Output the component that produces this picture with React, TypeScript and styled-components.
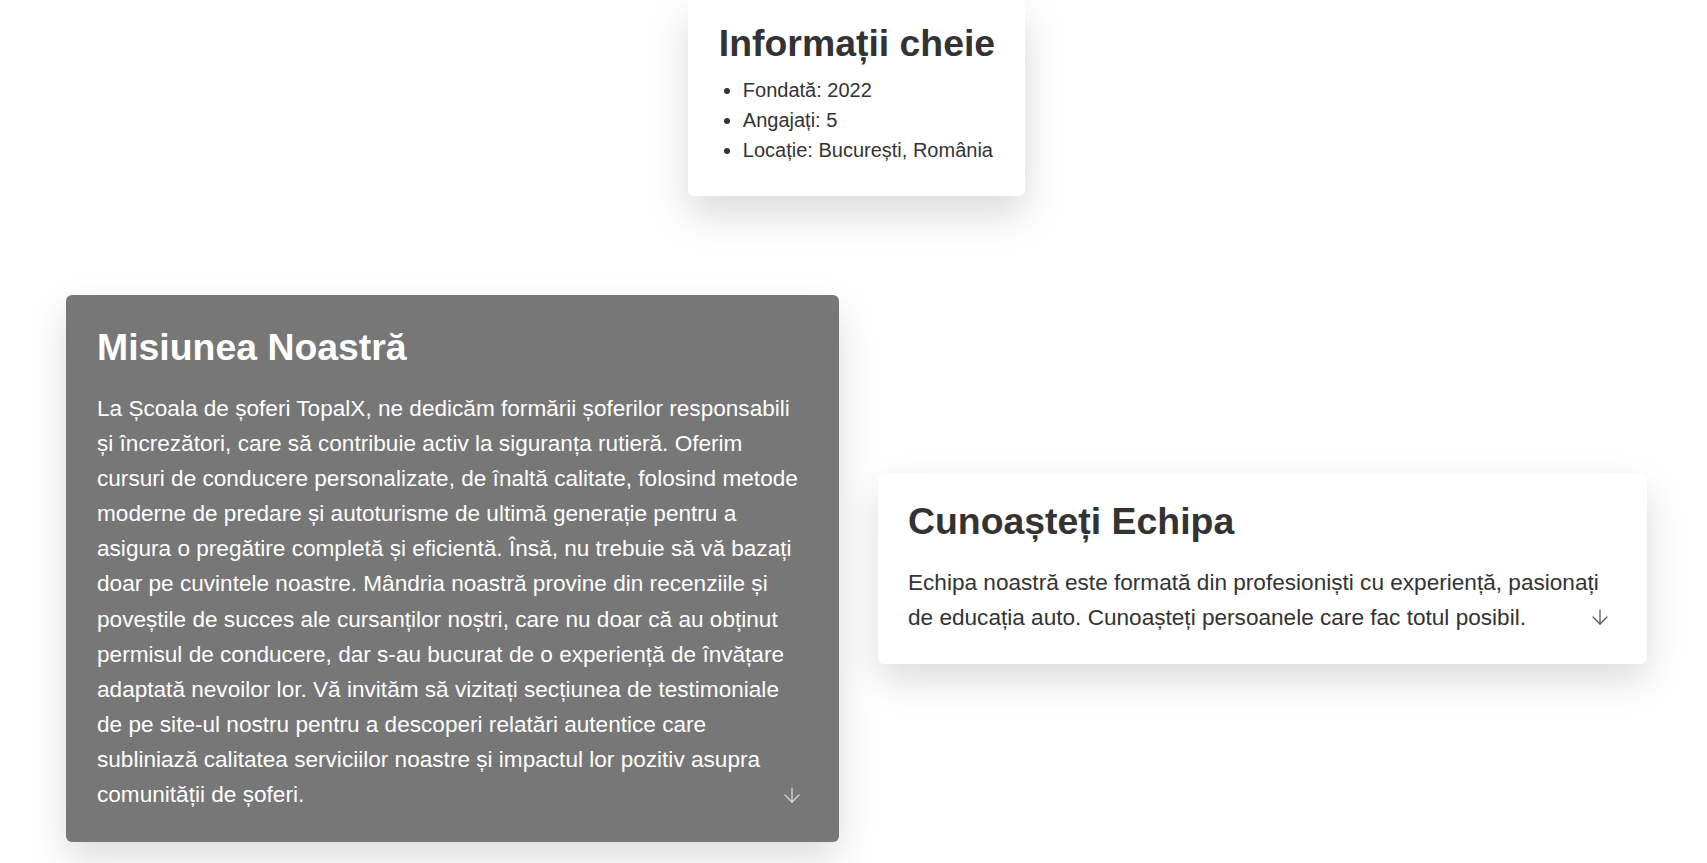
import React from "react";
import styled, { createGlobalStyle } from "styled-components";
import { ArrowDown } from "lucide-react";

const GlobalStyle = createGlobalStyle`
  html, body {
    margin: 0;
    padding: 0;
    background: #ffffff;
    font-family: "Liberation Sans", Arial, sans-serif;
    color: #333333;
  }
  * { box-sizing: border-box; }
`;

const Page = styled.main`
  width: 1707px;
  height: 863px;
  overflow: hidden;
  padding-left: 66px;
`;

const Inner = styled.div`
  width: 1581px;
  display: flex;
  flex-direction: column;
`;

const InfoRow = styled.div`
  display: flex;
  justify-content: center;
`;

const InfoCard = styled.section`
  background: #ffffff;
  border-radius: 0 0 6px 6px;
  padding: 22px 30px 31px 31px;
  box-shadow: 0 18px 40px rgba(0, 0, 0, 0.15);
`;

const InfoTitle = styled.h2`
  margin: 0 0 10px;
  font-size: 37.4px;
  font-weight: 700;
  line-height: normal;
  color: #333333;
`;

const InfoList = styled.ul`
  margin: 0;
  padding-left: 24px;
  font-size: 20px;
  line-height: 30px;
  color: #333333;
`;

const CardsRow = styled.div`
  margin-top: 99px;
  display: grid;
  grid-template-columns: 773px 769px;
  column-gap: 39px;
  align-items: center;
`;

const Card = styled.section<{ $dark?: boolean }>`
  position: relative;
  background: ${(p) => (p.$dark ? "#777777" : "#ffffff")};
  color: ${(p) => (p.$dark ? "#ffffff" : "#333333")};
  border-radius: 6px;
  padding: ${(p) => (p.$dark ? "31px 34px 30px 31px" : "27px 30px 29px 30px")};
  box-shadow: 0 16px 38px rgba(0, 0, 0, 0.14);
`;

const CardTitle = styled.h2`
  margin: 0 0 22px;
  font-size: 37.4px;
  font-weight: 700;
  line-height: normal;
  color: inherit;
`;

const CardText = styled.p`
  margin: 0;
  font-size: 22.6px;
  line-height: 35.1px;
  color: inherit;
`;

const Arrow = styled.span<{ $dark?: boolean }>`
  position: absolute;
  right: 35px;
  bottom: 35px;
  display: flex;
  color: ${(p) => (p.$dark ? "rgba(255,255,255,0.75)" : "#555555")};
`;

export default function App() {
  return (
    <>
      <GlobalStyle />
      <Page>
        <Inner>
          <InfoRow>
            <InfoCard>
              <InfoTitle>Informații cheie</InfoTitle>
              <InfoList>
                <li>Fondată: 2022</li>
                <li>Angajați: 5</li>
                <li>Locație: București, România</li>
              </InfoList>
            </InfoCard>
          </InfoRow>
          <CardsRow>
            <Card $dark>
              <CardTitle>Misiunea Noastră</CardTitle>
              <CardText>
                La Școala de șoferi TopalX, ne dedicăm formării șoferilor responsabili și
                încrezători, care să contribuie activ la siguranța rutieră. Oferim cursuri de
                conducere personalizate, de înaltă calitate, folosind metode moderne de predare
                și autoturisme de ultimă generație pentru a asigura o pregătire completă și
                eficientă. Însă, nu trebuie să vă bazați doar pe cuvintele noastre. Mândria
                noastră provine din recenziile și poveștile de succes ale cursanților noștri,
                care nu doar că au obținut permisul de conducere, dar s-au bucurat de o
                experiență de învățare adaptată nevoilor lor. Vă invităm să vizitați secțiunea
                de testimoniale de pe site-ul nostru pentru a descoperi relatări autentice care
                subliniază calitatea serviciilor noastre și impactul lor pozitiv asupra
                comunității de șoferi.
              </CardText>
              <Arrow $dark>
                <ArrowDown size={24} strokeWidth={1.25} />
              </Arrow>
            </Card>
            <Card>
              <CardTitle>Cunoașteți Echipa</CardTitle>
              <CardText>
                Echipa noastră este formată din profesioniști cu experiență, pasionați de
                educația auto. Cunoașteți persoanele care fac totul posibil.
              </CardText>
              <Arrow>
                <ArrowDown size={24} strokeWidth={1.25} />
              </Arrow>
            </Card>
          </CardsRow>
        </Inner>
      </Page>
    </>
  );
}
